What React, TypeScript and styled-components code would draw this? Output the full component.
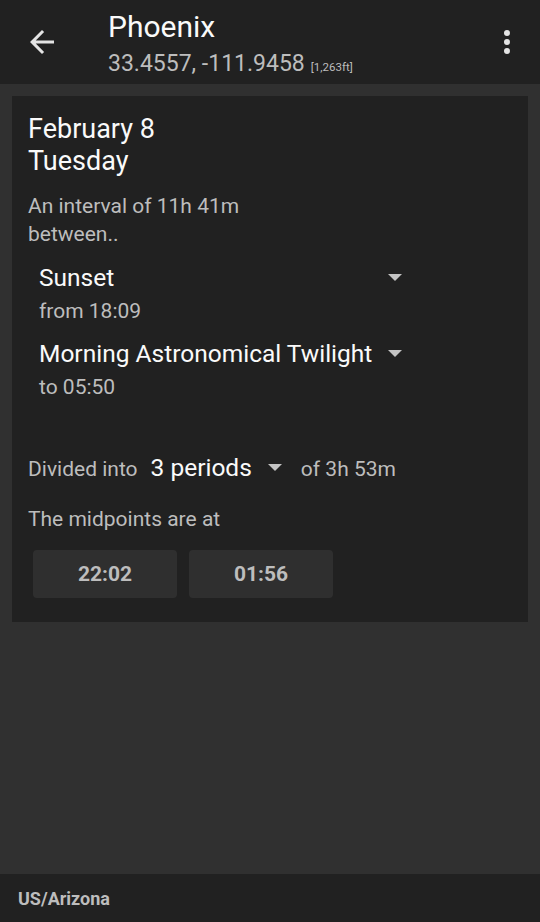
import React from "react";
import styled, { createGlobalStyle } from "styled-components";

const GlobalStyle = createGlobalStyle`
  html, body {
    margin: 0;
    padding: 0;
    background: #303030;
    font-family: Roboto, "Noto Sans", sans-serif;
  }
  * {
    box-sizing: border-box;
  }
`;

const Screen = styled.div`
  display: flex;
  flex-direction: column;
  width: 540px;
  height: 922px;
  background: #303030;
  color: #fafafa;
`;

const Toolbar = styled.header`
  display: flex;
  align-items: flex-start;
  height: 84px;
  flex-shrink: 0;
  background: #212121;
`;

const IconButton = styled.div<{ $width: number }>`
  display: flex;
  align-items: center;
  justify-content: center;
  width: ${(p) => p.$width}px;
  height: 84px;
  flex-shrink: 0;
  color: #e4e4e4;
`;

const TitleBlock = styled.div`
  display: flex;
  flex-direction: column;
  flex: 1;
  margin-left: 24px;
  padding-top: 10px;
`;

const Title = styled.div`
  font-size: 30px;
  line-height: 34px;
  color: #fafafa;
`;

const Subtitle = styled.div`
  margin-top: 5px;
  font-size: 23px;
  line-height: 30px;
  color: #bdbdbd;
  white-space: nowrap;
`;

const Elevation = styled.span`
  font-size: 11.5px;
  margin-left: 6px;
  color: #bdbdbd;
`;

const Main = styled.main`
  flex: 1;
  padding: 12px 12px 0;
`;

const Card = styled.section`
  background: #212121;
  padding: 17px 16px 24px;
`;

const DateText = styled.div`
  font-size: 27px;
  line-height: 32px;
  color: #fafafa;
`;

const Note = styled.div<{ $mt?: number }>`
  margin-top: ${(p) => p.$mt ?? 0}px;
  font-size: 21px;
  line-height: 28px;
  color: #bdbdbd;
`;

const Event = styled.div<{ $mt: number }>`
  margin-top: ${(p) => p.$mt}px;
  padding-left: 11px;
`;

const Spinner = styled.div<{ $width?: number; $gap?: number }>`
  display: flex;
  align-items: center;
  gap: ${(p) => p.$gap ?? 0}px;
  width: ${(p) => (p.$width ? `${p.$width}px` : "auto")};
`;

const SpinnerText = styled.span<{ $grow?: boolean }>`
  flex: ${(p) => (p.$grow ? 1 : "none")};
  font-size: 24.5px;
  line-height: 30px;
  color: #fafafa;
  white-space: nowrap;
`;

const Caret = styled.span`
  width: 0;
  height: 0;
  flex-shrink: 0;
  border-left: 7px solid transparent;
  border-right: 7px solid transparent;
  border-top: 7.5px solid #c4c4c4;
  margin-top: -2px;
`;

const EventTime = styled.div`
  margin-top: 4px;
  font-size: 21px;
  line-height: 28px;
  color: #bdbdbd;
`;

const DivideRow = styled.div`
  display: flex;
  align-items: center;
  margin-top: 52px;
  height: 30px;
`;

const InlineNote = styled.span<{ $ml?: number }>`
  margin-left: ${(p) => p.$ml ?? 0}px;
  font-size: 21px;
  line-height: 30px;
  color: #bdbdbd;
  padding-top: 1px;
`;

const Midpoints = styled.div`
  display: flex;
  gap: 12px;
  margin-top: 17px;
  padding-left: 5px;
`;

const TimeButton = styled.div`
  display: flex;
  align-items: center;
  justify-content: center;
  width: 144px;
  height: 48px;
  border-radius: 4px;
  background: #2f2f2f;
  font-size: 21px;
  font-weight: 700;
  color: #bdbdbd;
`;

const Footer = styled.footer`
  height: 48px;
  flex-shrink: 0;
  background: #212121;
  padding: 2px 18px 0;
  font-size: 18px;
  font-weight: 700;
  line-height: 46px;
  color: #bdbdbd;
`;

const BackIcon = () => (
  <svg width="36" height="36" viewBox="0 0 24 24" fill="currentColor">
    <path d="M20 11H7.83l5.59-5.59L12 4l-8 8 8 8 1.41-1.41L7.83 13H20v-2z" />
  </svg>
);

const MoreIcon = () => (
  <svg width="36" height="36" viewBox="0 0 24 24" fill="currentColor">
    <circle cx="12" cy="6" r="2" />
    <circle cx="12" cy="12" r="2" />
    <circle cx="12" cy="18" r="2" />
  </svg>
);

const midpoints = ["22:02", "01:56"];

export default function App() {
  return (
    <>
      <GlobalStyle />
      <Screen>
        <Toolbar>
          <IconButton $width={84}>
            <BackIcon />
          </IconButton>
          <TitleBlock>
            <Title>Phoenix</Title>
            <Subtitle>
              33.4557, -111.9458
              <Elevation>[1,263ft]</Elevation>
            </Subtitle>
          </TitleBlock>
          <IconButton $width={66}>
            <MoreIcon />
          </IconButton>
        </Toolbar>

        <Main>
          <Card>
            <DateText>February 8</DateText>
            <DateText>Tuesday</DateText>

            <Note $mt={15}>
              An interval of 11h 41m
              <br />
              between..
            </Note>

            <Event $mt={15}>
              <Spinner $width={363}>
                <SpinnerText $grow>Sunset</SpinnerText>
                <Caret />
              </Spinner>
              <EventTime>from 18:09</EventTime>
            </Event>

            <Event $mt={14}>
              <Spinner $width={363}>
                <SpinnerText $grow>Morning Astronomical Twilight</SpinnerText>
                <Caret />
              </Spinner>
              <EventTime>to 05:50</EventTime>
            </Event>

            <DivideRow>
              <InlineNote>Divided into</InlineNote>
              <Spinner $gap={16} style={{ marginLeft: 13 }}>
                <SpinnerText>3 periods</SpinnerText>
                <Caret />
              </Spinner>
              <InlineNote $ml={19}>of 3h 53m</InlineNote>
            </DivideRow>

            <Note $mt={22}>The midpoints are at</Note>

            <Midpoints>
              {midpoints.map((t) => (
                <TimeButton key={t}>{t}</TimeButton>
              ))}
            </Midpoints>
          </Card>
        </Main>

        <Footer>US/Arizona</Footer>
      </Screen>
    </>
  );
}
